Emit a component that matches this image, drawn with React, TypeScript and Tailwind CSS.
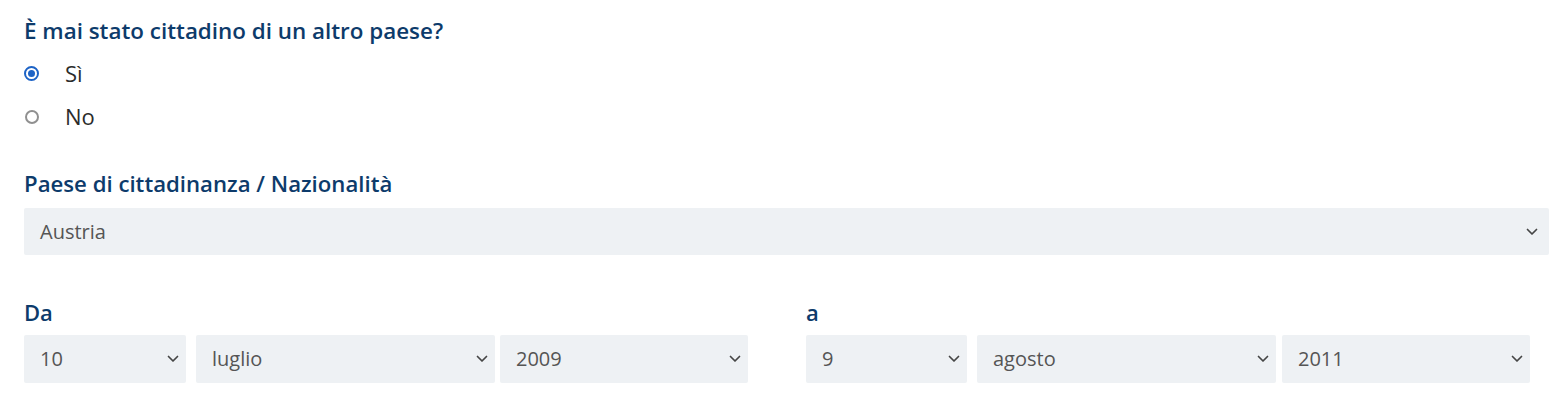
import React from "react";

function Chevron() {
  return (
    <svg width="12" height="8" viewBox="0 0 12 8" className="shrink-0">
      <path d="M1.5 1.5l4.5 4.5 4.5-4.5" fill="none" stroke="#454545" strokeWidth="1.7" strokeLinecap="round" strokeLinejoin="round" />
    </svg>
  );
}

function Select({ value, className }: { value: string; className: string }) {
  return (
    <div className={"flex items-center justify-between bg-[#eef1f4] rounded-[2px] pl-4 text-[20px] text-[#555555] " + className}>
      <span>{value}</span>
      <Chevron />
    </div>
  );
}

function Radio({ checked, label }: { checked: boolean; label: string }) {
  return (
    <div className="flex items-center h-[43px]">
      <div className="w-[15px] flex justify-center">
        {checked ? (
          <div className="w-[15px] h-[15px] rounded-full border-[2px] border-[#1d63c6] flex items-center justify-center">
            <div className="w-[7px] h-[7px] rounded-full bg-[#1d63c6]" />
          </div>
        ) : (
          <div className="w-[14px] h-[14px] rounded-full border-[2px] border-[#909090]" />
        )}
      </div>
      <span className="ml-[26px] text-[22px] text-[#2b2b2b]">{label}</span>
    </div>
  );
}

export default function App() {
  return (
    <div className="bg-white w-[1568px] h-[400px] pl-6 pt-[16px] font-['Open_Sans',sans-serif]">
      <h2 className="text-[22.4px] leading-[30px] font-semibold text-[#0d3b6b]">È mai stato cittadino di un altro paese?</h2>
      <div className="mt-[6px]">
        <Radio checked label="Sì" />
        <Radio checked={false} label="No" />
      </div>
      <div className="mt-[31px] text-[22.2px] leading-[30px] font-semibold text-[#0d3b6b]">Paese di cittadinanza / Nazionalità</div>
      <Select value="Austria" className="mt-[9px] h-[47px] w-[1525px] pr-[11px]" />
      <div className="mt-[42px] flex">
        <div className="w-[725px]">
          <div className="text-[22px] leading-[30px] font-semibold text-[#0d3b6b]">Da</div>
          <div className="mt-[8px] flex">
            <Select value="10" className="h-[48px] w-[162px] pr-[7px]" />
            <Select value="luglio" className="h-[48px] w-[299px] ml-[10px] pr-[7px]" />
            <Select value="2009" className="h-[48px] w-[248px] ml-[5px] pr-[7px]" />
          </div>
        </div>
        <div className="ml-[57px] w-[724px]">
          <div className="text-[22px] leading-[30px] font-semibold text-[#0d3b6b]">a</div>
          <div className="mt-[8px] flex">
            <Select value="9" className="h-[48px] w-[161px] pr-[7px]" />
            <Select value="agosto" className="h-[48px] w-[299px] ml-[10px] pr-[7px]" />
            <Select value="2011" className="h-[48px] w-[248px] ml-[6px] pr-[7px]" />
          </div>
        </div>
      </div>
    </div>
  );
}
